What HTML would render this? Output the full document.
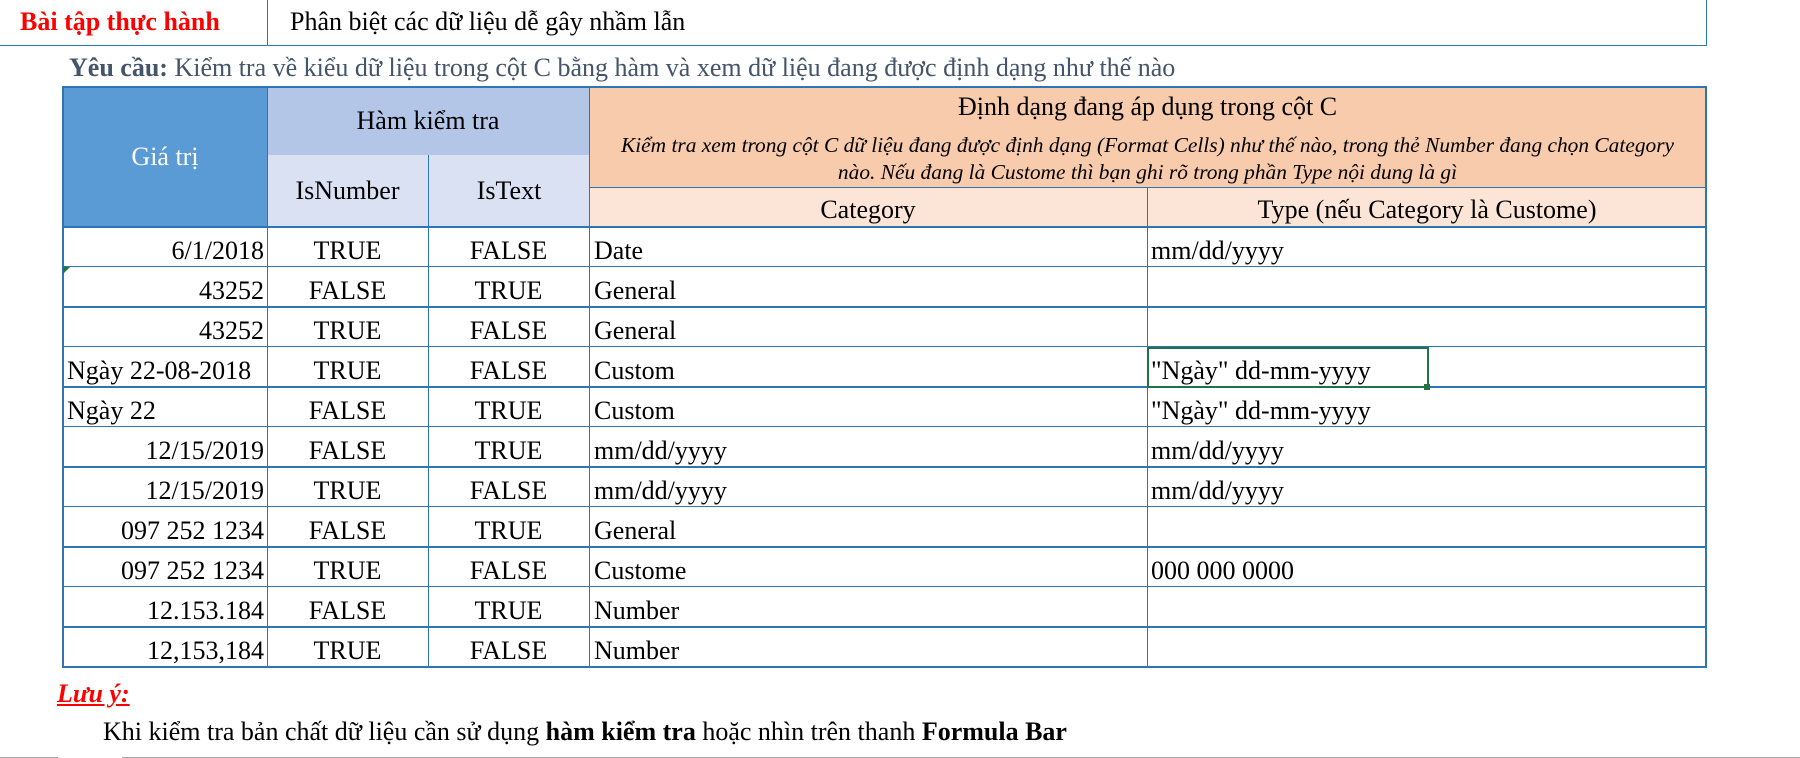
<!DOCTYPE html>
<html><head><meta charset="utf-8"><style>
body{margin:0;width:1800px;height:758px;background:#fff;position:relative;overflow:hidden;font-family:"Liberation Serif","Noto Serif CJK SC",serif;font-size:26px;color:#000}
.a{position:absolute;white-space:nowrap}
.c{position:absolute;display:flex;align-items:center;box-sizing:border-box}
.hl{position:absolute;background:#2e75b6}
.vl{position:absolute;background:#2e75b6;width:1px}
</style></head><body>
<div class="a" style="left:20px;top:7px;color:#ff0000;font-weight:bold">Bài tập thực hành</div>
<div class="a" style="left:290px;top:7px">Phân biệt các dữ liệu dễ gây nhầm lẫn</div>
<div class="hl" style="left:0;top:45px;width:1707px;height:1px"></div>
<div class="vl" style="left:267px;top:0;height:46px"></div>
<div class="vl" style="left:1706px;top:0;height:46px"></div>
<div class="a" style="left:69px;top:53px;color:#44546a"><b>Yêu cầu:</b> Kiểm tra về kiểu dữ liệu trong cột C bằng hàm và xem dữ liệu đang được định dạng như thế nào</div>

<div class="c" style="left:63px;top:87px;width:204px;height:140px;background:#5b9bd5;color:#fff;justify-content:center">Giá trị</div>
<div class="c" style="left:267px;top:87px;width:322px;height:68px;background:#b4c6e7;justify-content:center">Hàm kiểm tra</div>
<div class="c" style="left:267px;top:155px;width:161px;height:72px;background:#d9e1f2;justify-content:center">IsNumber</div>
<div class="c" style="left:428px;top:155px;width:161px;height:72px;background:#d9e1f2;justify-content:center;border-left:1px solid #2e75b6">IsText</div>
<div class="a" style="left:589px;top:87px;width:1117px;height:100px;background:#f8cbad"></div>
<div class="a" style="left:589px;top:92px;width:1117px;text-align:center">Định dạng đang áp dụng trong cột C</div>
<div class="a" style="left:589px;top:132px;width:1117px;text-align:center;font-style:italic;font-size:21.4px;white-space:normal;line-height:27px">Kiểm tra xem trong cột C dữ liệu đang được định dạng (Format Cells) như thế nào, trong thẻ Number đang chọn Category<br>nào. Nếu đang là Custome thì bạn ghi rõ trong phần Type nội dung là gì</div>
<div class="c" style="left:589px;top:187px;width:558px;height:40px;background:#fce4d6;justify-content:center;border-top:1px solid #2e75b6;padding-top:4px">Category</div>
<div class="c" style="left:1147px;top:187px;width:559px;height:40px;background:#fce4d6;justify-content:center;border-top:1px solid #2e75b6;border-left:1px solid #2e75b6;padding-top:4px">Type (nếu Category là Custome)</div>
<div class="hl" style="left:63px;top:226px;width:1644px;height:2px"></div>

<div class="hl" style="left:63px;top:86px;width:1644px;height:2px"></div>
<div class="hl" style="left:62px;top:86px;width:2px;height:582px"></div>
<div class="hl" style="left:1705px;top:86px;width:2px;height:582px"></div>
<div class="hl" style="left:63px;top:666px;width:1644px;height:2px"></div>
<div class="vl" style="left:267px;top:87px;height:580px"></div>
<div class="vl" style="left:428px;top:227px;height:440px"></div>
<div class="vl" style="left:589px;top:87px;height:580px"></div>
<div class="vl" style="left:1147px;top:227px;height:440px"></div>

<div id="rows"></div>
<script>
var d=[["6/1/2018",1,"TRUE","FALSE","Date","mm/dd/yyyy"],
["43252",1,"FALSE","TRUE","General",""],
["43252",1,"TRUE","FALSE","General",""],
["Ngày 22-08-2018",0,"TRUE","FALSE","Custom","\"Ngày\" dd-mm-yyyy"],
["Ngày 22",0,"FALSE","TRUE","Custom","\"Ngày\" dd-mm-yyyy"],
["12/15/2019",1,"FALSE","TRUE","mm/dd/yyyy","mm/dd/yyyy"],
["12/15/2019",1,"TRUE","FALSE","mm/dd/yyyy","mm/dd/yyyy"],
["097 252 1234",1,"FALSE","TRUE","General",""],
["097 252 1234",1,"TRUE","FALSE","Custome","000 000 0000"],
["12.153.184",1,"FALSE","TRUE","Number",""],
["12,153,184",1,"TRUE","FALSE","Number",""]];
var h="";
for(var i=0;i<d.length;i++){var t=227+i*40,r=d[i];
h+='<div class="c" style="left:65px;top:'+t+'px;width:200px;height:40px;padding-top:8px;justify-content:'+(r[1]?'flex-end':'flex-start')+';padding-left:2px;padding-right:1px">'+r[0]+'</div>';
h+='<div class="c" style="left:267px;top:'+t+'px;width:161px;height:40px;padding-top:8px;justify-content:center">'+r[2]+'</div>';
h+='<div class="c" style="left:428px;top:'+t+'px;width:161px;height:40px;padding-top:8px;justify-content:center">'+r[3]+'</div>';
h+='<div class="c" style="left:594px;top:'+t+'px;height:40px;padding-top:8px">'+r[4]+'</div>';
h+='<div class="c" style="left:1151px;top:'+t+'px;height:40px;padding-top:8px">'+r[5]+'</div>';
if(i>0)h+='<div class="hl" style="left:63px;top:'+(t-1)+'px;width:1644px;height:'+(i%2?1:2)+'px"></div>';
}
document.getElementById("rows").innerHTML=h;
</script>
<div class="a" style="left:63px;top:267px;width:0;height:0;border-top:7px solid #1e7b34;border-right:7px solid transparent"></div>
<div class="a" style="left:1147px;top:347px;width:282px;height:41px;border:2px solid #217346;box-sizing:border-box"></div>
<div class="a" style="left:1424px;top:384px;width:6px;height:6px;background:#217346"></div>

<div class="a" style="left:57px;top:679px;color:#ff0000;font-weight:bold;font-style:italic;text-decoration:underline">Lưu ý:</div>
<div class="a" style="left:103px;top:717px">Khi kiểm tra bản chất dữ liệu cần sử dụng <b>hàm kiểm tra</b> hoặc nhìn trên thanh <b>Formula Bar</b></div>
<div class="a" style="left:0;top:757px;width:58px;height:1px;background:#a6a6a6"></div>
<div class="a" style="left:122px;top:757px;width:1678px;height:1px;background:#a6a6a6"></div>
</body></html>
